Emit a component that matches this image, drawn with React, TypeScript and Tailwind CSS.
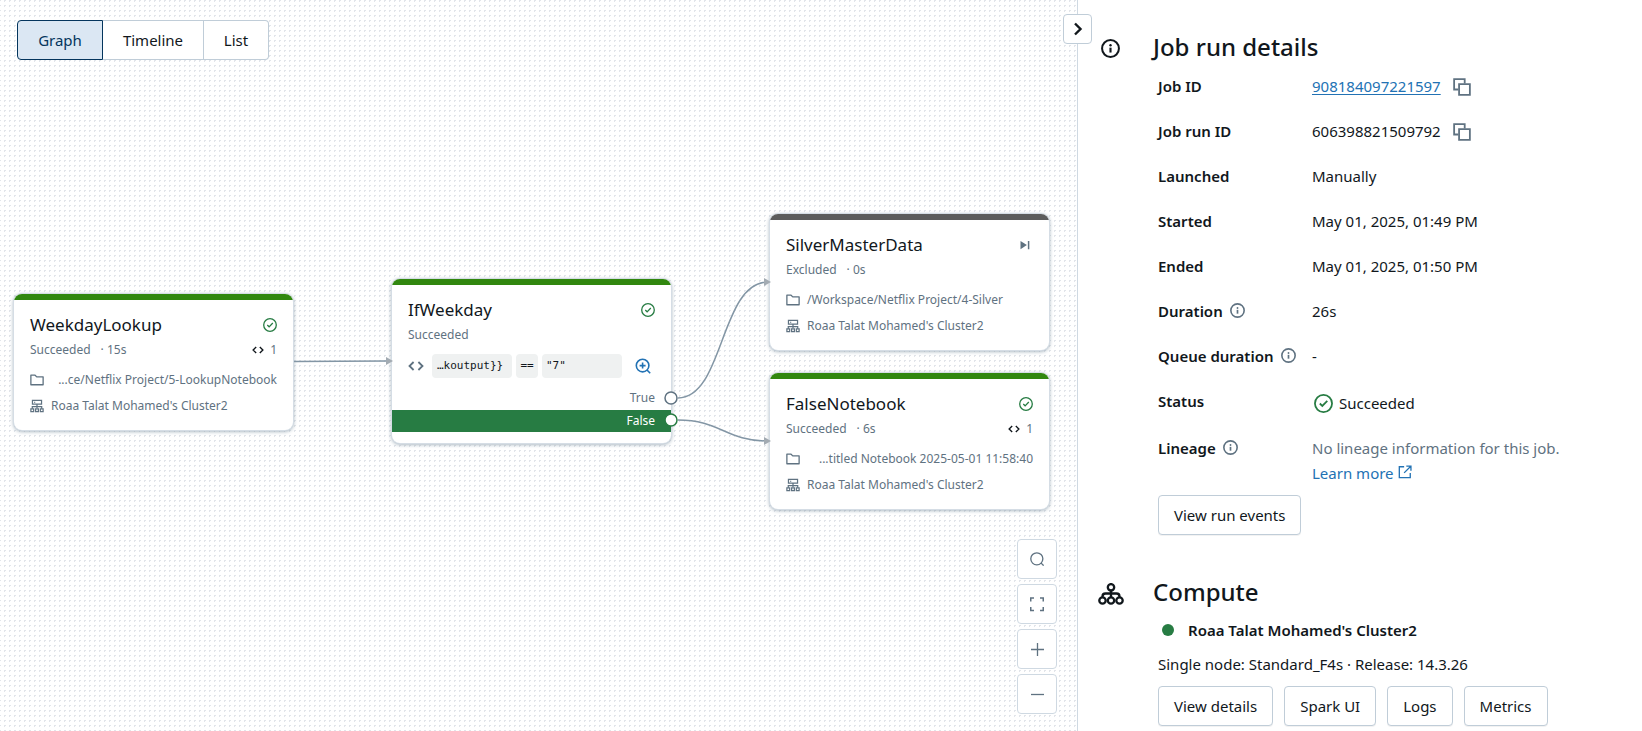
import type { ReactNode } from 'react';

type IconProps = { className?: string };

const CheckCircleIcon = ({ className }: IconProps) => (
  <svg viewBox="0 0 16 16" fill="none" stroke="currentColor" strokeWidth="1.5" className={className} aria-hidden="true">
    <circle cx="8" cy="8" r="7.2" />
    <path d="M4.9 8 7 10.1l4.2-4.3" />
  </svg>
);

const InfoIcon = ({ className }: IconProps) => (
  <svg viewBox="0 0 16 16" className={className} aria-hidden="true">
    <circle cx="8" cy="8" r="7.1" fill="none" stroke="currentColor" strokeWidth="1.7" />
    <path fill="currentColor" d="M7.1 7.3h1.8V11.4H7.1z" />
    <circle cx="8" cy="5.3" r="1" fill="currentColor" />
  </svg>
);

const CopyIcon = ({ className }: IconProps) => (
  <svg viewBox="0 0 16 16" fill="none" stroke="currentColor" strokeWidth="1.6" className={className} aria-hidden="true">
    <path d="M4.8 10.2H1V1h9.4v3.8" />
    <path d="M5.4 5.4h9.6v9.6H5.4z" />
  </svg>
);

const FolderIcon = ({ className }: IconProps) => (
  <svg viewBox="0 0 16 16" fill="none" stroke="currentColor" strokeWidth="1.5" className={className} aria-hidden="true">
    <path d="M1 2.5h4.8L7.7 4.4H15v9H1z" strokeLinejoin="round" />
  </svg>
);

const ServerTreeIcon = ({ className }: IconProps) => (
  <svg viewBox="0 0 16 16" fill="none" stroke="currentColor" strokeWidth="1.4" className={className} aria-hidden="true">
    <path d="M2.8 1.5h10.4v4.3H2.8zM4.6 3.7h1.4M8 5.8v4.7M2.6 11V8.7h10.8V11" />
    <path d="M1 11.3h3.2v3H1zM6.4 11.3h3.2v3H6.4zM11.8 11.3H15v3h-3.2z" />
  </svg>
);

const CodeIcon = ({ className }: IconProps) => (
  <svg viewBox="0 0 16 16" fill="none" stroke="currentColor" strokeWidth="1.8" className={className} aria-hidden="true">
    <path d="M5.6 4 1.5 8l4.1 4M10.4 4l4.1 4-4.1 4" />
  </svg>
);

const SkipIcon = ({ className }: IconProps) => (
  <svg viewBox="0 0 16 16" fill="currentColor" className={className} aria-hidden="true">
    <path d="M2 2.5 10.5 8 2 13.5zM11.8 2.5h2v11h-2z" />
  </svg>
);

const ZoomInIcon = ({ className }: IconProps) => (
  <svg viewBox="0 0 16 16" fill="none" stroke="currentColor" strokeWidth="1.6" className={className} aria-hidden="true">
    <circle cx="7.6" cy="7.6" r="6.3" />
    <path d="m12 12 3.2 3.2M7.6 4.6v6M4.6 7.6h6" />
  </svg>
);

const SearchIcon = ({ className }: IconProps) => (
  <svg viewBox="0 0 16 16" fill="none" stroke="currentColor" strokeWidth="1.5" className={className} aria-hidden="true">
    <circle cx="7.8" cy="7.8" r="6.9" />
    <path d="m12.4 12.4 3.2 3.2" />
  </svg>
);

const ExpandIcon = ({ className }: IconProps) => (
  <svg viewBox="0 0 16 16" fill="none" stroke="currentColor" strokeWidth="1.5" className={className} aria-hidden="true">
    <path d="M5 2H1.75v3.5M11 2h3.25v3.5M5 14.5H1.75V11M11 14.5h3.25V11" />
  </svg>
);

const PlusIcon = ({ className }: IconProps) => (
  <svg viewBox="0 0 16 16" fill="none" stroke="currentColor" strokeWidth="1.6" className={className} aria-hidden="true">
    <path d="M8 0v16M0 8h16" />
  </svg>
);

const MinusIcon = ({ className }: IconProps) => (
  <svg viewBox="0 0 16 16" fill="none" stroke="currentColor" strokeWidth="1.6" className={className} aria-hidden="true">
    <path d="M0 8h16" />
  </svg>
);

const ChevronIcon = ({ className }: IconProps) => (
  <svg viewBox="0 0 16 16" fill="none" stroke="currentColor" strokeWidth="2.4" className={className} aria-hidden="true">
    <path d="m5 2.5 5.5 5.5L5 13.5" />
  </svg>
);

const ExternalIcon = ({ className }: IconProps) => (
  <svg viewBox="0 0 16 16" fill="none" stroke="currentColor" strokeWidth="1.5" className={className} aria-hidden="true">
    <path d="M7 2H1.5v12.5H14V9M9.5 1.2h5.3v5.3M14.6 1.4 7 9" />
  </svg>
);

const ClusterIcon = ({ className }: IconProps) => (
  <svg viewBox="0 0 26 22" fill="none" stroke="currentColor" strokeWidth="2.3" className={className} aria-hidden="true">
    <circle cx="13" cy="4.3" r="3.2" />
    <circle cx="4.5" cy="17.5" r="3.2" />
    <circle cx="13" cy="17.5" r="3.2" />
    <circle cx="21.5" cy="17.5" r="3.2" />
    <path d="M13 7.5v7M4.5 14v-.5c0-2 1-3 3-3h11c2 0 3 1 3 3v.5" />
  </svg>
);

const focusRing = 'cursor-pointer focus-visible:outline-2 focus-visible:outline-[#2272b4]';

function TaskNode({
  name,
  status,
  place,
  bar,
  icon,
  children,
}: {
  name: string;
  status: ReactNode;
  place: string;
  bar: string;
  icon: ReactNode;
  children: ReactNode;
}) {
  return (
    <article
      className={`absolute w-[279px] overflow-hidden rounded-lg bg-white pb-[11px] shadow-[0_0_0_1px_#d5dde5,0_1px_4px_#8396a5] ${place}`}
    >
      <div className={`h-[6px] ${bar}`} />
      <header className="px-4 pt-3">
        <div className="flex h-[25px] items-center justify-between">
          <h3 className="text-[17px] text-[#11171c]">{name}</h3>
          {icon}
        </div>
        <div className="flex h-[26px] items-center justify-between">{status}</div>
      </header>
      {children}
    </article>
  );
}

function NotebookNode({
  name,
  state,
  time,
  runs,
  path,
  clipped,
  place,
  excluded,
}: {
  name: string;
  state: string;
  time: string;
  runs?: number;
  path: string;
  clipped?: boolean;
  place: string;
  excluded?: boolean;
}) {
  return (
    <TaskNode
      name={name}
      place={place}
      bar={excluded ? 'bg-[#5c5c5c]' : 'bg-[#31870f]'}
      icon={
        excluded ? (
          <SkipIcon className="mr-0.5 size-3 text-[#5f7281]" />
        ) : (
          <CheckCircleIcon className="size-3.5 text-[#277c43]" />
        )
      }
      status={
        <>
          <span className="flex gap-2.5">
            <span>{state}</span>
            <span>· {time}</span>
          </span>
          {runs !== undefined && (
            <span className="flex items-center gap-1.5">
              <CodeIcon className="size-3 text-[#11171c]" />
              {runs}
            </span>
          )}
        </>
      }
    >
      <div className="px-4 pt-1">
        <div className="flex h-[26px] items-center gap-[7px]">
          <FolderIcon className="size-3.5 shrink-0" />
          <span className={`grow whitespace-nowrap ${clipped ? 'text-right' : ''}`}>{path}</span>
        </div>
        <div className="flex h-[26px] items-center gap-[7px]">
          <ServerTreeIcon className="size-3.5 shrink-0" />
          <span>Roaa Talat Mohamed's Cluster2</span>
        </div>
      </div>
    </TaskNode>
  );
}

function Graph() {
  return (
    <div className="absolute inset-0 text-[12px] text-[#5f7281]">
      <NotebookNode
        name="WeekdayLookup"
        state="Succeeded"
        time="15s"
        runs={1}
        path="...ce/Netflix Project/5-LookupNotebook"
        clipped
        place="left-[14px] top-[294px]"
      />
      <TaskNode
        name="IfWeekday"
        place="left-[392px] top-[279px]"
        bar="bg-[#31870f]"
        icon={<CheckCircleIcon className="size-3.5 text-[#277c43]" />}
        status={<span>Succeeded</span>}
      >
        <div className="flex items-center gap-1 px-4 pt-1.5">
          <CodeIcon className="mr-1 size-4" />
          <code className="h-6 w-20 rounded bg-[#eff1f1] px-[5px] font-['DejaVu_Sans_Mono',monospace] text-[11px] leading-6 text-[#11171c]">
            …koutput{'}}'}
          </code>
          <code className="h-6 w-[22px] rounded bg-[#eff1f1] text-center font-['DejaVu_Sans_Mono',monospace] text-[11px] leading-6 text-[#11171c]">
            ==
          </code>
          <code className="h-6 w-20 rounded bg-[#eff1f1] px-1 font-['DejaVu_Sans_Mono',monospace] text-[11px] leading-6 text-[#11171c]">
            "7"
          </code>
          <button type="button" aria-label="Show condition" className={`mr-1 ml-auto text-[#2272b4] ${focusRing}`}>
            <ZoomInIcon className="size-4" />
          </button>
        </div>
        <div className="mt-2 flex h-6 items-center justify-end px-4">True</div>
        <div className="flex h-[22px] items-center justify-end bg-[#277c43] px-4 text-white">False</div>
      </TaskNode>
      <NotebookNode
        name="SilverMasterData"
        state="Excluded"
        time="0s"
        path="/Workspace/Netflix Project/4-Silver"
        excluded
        place="left-[770px] top-[214px]"
      />
      <NotebookNode
        name="FalseNotebook"
        state="Succeeded"
        time="6s"
        runs={1}
        path="...titled Notebook 2025-05-01 11:58:40"
        clipped
        place="left-[770px] top-[373px]"
      />
      <svg className="pointer-events-none absolute top-0 left-0 h-[520px] w-[1060px]" fill="none" aria-hidden="true">
        <g stroke="#8396a5" strokeWidth="1.5">
          <path d="M294 361.5 L388 361" />
          <path d="M678 398 C724 398 720 282 768 282" />
          <path d="M678 420 C720 420 726 441 768 441" />
        </g>
        <g fill="#a3abb2">
          <path d="m386 357 7 4-7 4z" />
          <path d="m764 278 7 4-7 4z" />
          <path d="m764 437 7 4-7 4z" />
        </g>
        <circle cx="671" cy="398" r="6" fill="white" stroke="#5f7281" strokeWidth="1.5" />
        <circle cx="671" cy="420" r="6" fill="white" stroke="#277c43" strokeWidth="1.5" />
      </svg>
    </div>
  );
}

function CanvasButton({ label, children }: { label: string; children: ReactNode }) {
  return (
    <button
      type="button"
      aria-label={label}
      className={`flex size-10 items-center justify-center rounded border border-[#cfd9e2] bg-white text-[#5f7281] hover:bg-slate-50 ${focusRing}`}
    >
      {children}
    </button>
  );
}

function Row({ label, info, children }: { label: string; info?: boolean; children: ReactNode }) {
  return (
    <div className="flex leading-[25px]">
      <dt className="flex w-[154px] shrink-0 gap-[7px] font-semibold whitespace-nowrap">
        {label}
        {info && <InfoIcon className="mt-1 size-[15px] shrink-0 text-[#5f7281]" />}
      </dt>
      <dd className="flex grow items-center gap-3">{children}</dd>
    </div>
  );
}

function PanelButton({ children }: { children: ReactNode }) {
  return (
    <button
      type="button"
      className={`h-10 rounded border border-[#c0cdd8] bg-white px-[15px] shadow-[0_1px_0_#0000000d] hover:bg-slate-50 ${focusRing}`}
    >
      {children}
    </button>
  );
}

function CopyButton({ label }: { label: string }) {
  return (
    <button type="button" aria-label={label} className={`text-[#5f7281] ${focusRing}`}>
      <CopyIcon className="size-[18px]" />
    </button>
  );
}

const link = 'text-[#2272b4]';

export default function App() {
  return (
    <div className="flex min-h-screen bg-white font-['Noto_Sans','Open_Sans',sans-serif] text-[15px] text-[#11171c]">
      <main className="relative flex grow flex-col justify-between overflow-hidden bg-[radial-gradient(circle_at_center,#e2e5ea_1px,transparent_1px)] bg-size-[5px_5px] bg-position-[2px_3px] pb-[17px]">
        <Graph />
        <div className="relative flex px-[17px] pt-5" role="group" aria-label="View">
          <button
            type="button"
            aria-pressed="true"
            className={`h-10 w-[86px] rounded-l border border-[#04355d] bg-[#dbe7f3] text-[#04355d] ${focusRing}`}
          >
            Graph
          </button>
          <button type="button" aria-pressed="false" className={`h-10 w-[101px] border-y border-r border-[#c0cdd8] bg-white ${focusRing}`}>
            Timeline
          </button>
          <button
            type="button"
            aria-pressed="false"
            className={`h-10 w-[65px] rounded-r border-y border-r border-[#c0cdd8] bg-white ${focusRing}`}
          >
            List
          </button>
        </div>
        <div className="relative flex flex-col items-end gap-[5px] pr-5">
          <CanvasButton label="Search">
            <SearchIcon className="size-3.5" />
          </CanvasButton>
          <CanvasButton label="Fit to screen">
            <ExpandIcon className="size-4" />
          </CanvasButton>
          <CanvasButton label="Zoom in">
            <PlusIcon className="size-[13px]" />
          </CanvasButton>
          <CanvasButton label="Zoom out">
            <MinusIcon className="size-[13px]" />
          </CanvasButton>
        </div>
      </main>

      <aside className="relative w-[565px] shrink-0 border-l border-[#cfd9e2] bg-white pt-[31px] pb-1 pl-5">
        <button
          type="button"
          aria-label="Collapse panel"
          className={`absolute top-[14px] left-[-15px] flex h-[30px] w-[29px] items-center justify-center rounded border border-[#c0cdd8] bg-white ${focusRing}`}
        >
          <ChevronIcon className="size-4" />
        </button>

        <section className="flex">
          <div className="w-[55px] shrink-0 pt-2 pl-[3px]">
            <InfoIcon className="size-[19px]" />
          </div>
          <div className="grow">
            <h2 className="text-[24px] leading-8 font-medium">Job run details</h2>
            <dl className="flex flex-col gap-5 pt-[11px] pl-[5px]">
              <Row label="Job ID">
                <a href="#job" className={`underline underline-offset-2 ${link}`}>
                  908184097221597
                </a>
                <CopyButton label="Copy job ID" />
              </Row>
              <Row label="Job run ID">
                606398821509792
                <CopyButton label="Copy job run ID" />
              </Row>
              <Row label="Launched">Manually</Row>
              <Row label="Started">May 01, 2025, 01:49 PM</Row>
              <Row label="Ended">May 01, 2025, 01:50 PM</Row>
              <Row label="Duration" info>
                26s
              </Row>
              <Row label="Queue duration" info>
                -
              </Row>
              <Row label="Status">
                <span className="flex items-center gap-1.5 pt-0.5">
                  <CheckCircleIcon className="ml-0.5 size-[19px] text-[#277c43]" />
                  Succeeded
                </span>
              </Row>
              <Row label="Lineage" info>
                <span className="text-[#5f7281]">
                  No lineage information for this job.
                  <br />
                  <a href="#lineage" className={`inline-flex items-center gap-1 ${link}`}>
                    Learn more
                    <ExternalIcon className="mb-1 size-3.5" />
                  </a>
                </span>
              </Row>
            </dl>
            <div className="pt-[9px] pl-[5px]">
              <PanelButton>View run events</PanelButton>
            </div>
          </div>
        </section>

        <section className="flex pt-[41px]">
          <div className="w-[55px] shrink-0 pt-[7px]">
            <ClusterIcon className="h-[22px] w-[26px]" />
          </div>
          <div className="grow">
            <h2 className="text-[24px] leading-8 font-medium">Compute</h2>
            <div className="flex flex-col pl-[5px]">
              <p className="flex h-11 items-center gap-3.5 pl-1 font-semibold">
                <span className="size-3 rounded-full bg-[#277c43]" />
                Roaa Talat Mohamed's Cluster2
              </p>
              <p className="leading-[25px]">Single node: Standard_F4s · Release: 14.3.26</p>
              <div className="flex gap-[11px] pt-[9px]">
                <PanelButton>View details</PanelButton>
                <PanelButton>Spark UI</PanelButton>
                <PanelButton>Logs</PanelButton>
                <PanelButton>Metrics</PanelButton>
              </div>
            </div>
          </div>
        </section>
      </aside>
    </div>
  );
}
